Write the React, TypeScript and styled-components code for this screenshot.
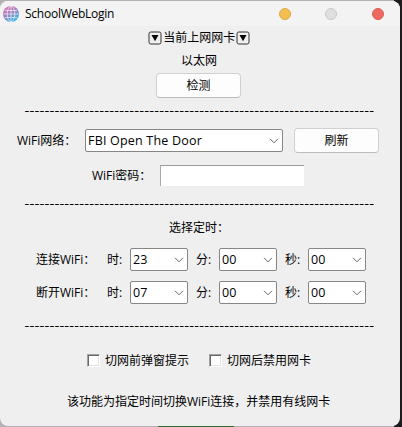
import React from "react";
import styled, { createGlobalStyle } from "styled-components";

const GlobalStyle = createGlobalStyle`
  * { box-sizing: border-box; }
  body { margin: 0; overflow: hidden; background: #1b1c1d; }
`;

const Desktop = styled.div`
  width: 402px;
  height: 427px;
  padding-top: 1px;
  background:
    linear-gradient(#1b1c1d, #1b1c1d) 394px 0 / 8px 427px no-repeat,
    linear-gradient(#2c6b2c, #2c6b2c) 158px 426px / 76px 1px no-repeat,
    #b3b1b3;
`;

const Window = styled.main`
  width: 400px;
  height: 425px;
  overflow: hidden;
  border-radius: 8px;
  background: #efefef;
  color: #000;
  font: 12px/16px "Open Sans", "Noto Sans CJK SC", sans-serif;
  white-space: nowrap;
`;

const TitleBar = styled.header`
  display: flex;
  align-items: center;
  height: 25px;
  padding-left: 3px;
  background: #f3f3f3;
`;

const Title = styled.h1`
  flex: 1;
  margin: 0 0 0 6px;
  font: 12px/16px "Open Sans", sans-serif;
  letter-spacing: -0.25px;
`;

const WindowControls = styled.div`
  display: flex;
  gap: 34px;
  padding-right: 16px;
`;

const Light = styled.button<{ $fill: string; $edge: string }>`
  width: 12px;
  height: 12px;
  padding: 0;
  border: 1px solid ${(p) => p.$edge};
  border-radius: 50%;
  background: ${(p) => p.$fill};
  &:nth-child(2) { margin-right: 1px; }
`;

const Row = styled.div<{ $h: number; $left?: number; $top?: number }>`
  display: flex;
  align-items: center;
  height: ${(p) => p.$h}px;
  margin-top: ${(p) => p.$top ?? 0}px;
  padding-left: ${(p) => p.$left ?? 0}px;
`;

const Label = styled.span<{ $w?: number }>`
  flex: none;
  width: ${(p) => (p.$w ? `${p.$w}px` : "auto")};
`;

const PushButton = styled.button`
  width: 85px;
  height: 25px;
  padding: 0;
  border: 1px solid #d0d0d0;
  border-bottom-color: #bcbcbc;
  border-radius: 4px;
  background: #fdfdfd;
  color: #000;
  font: inherit;
`;

const Rule = styled.div<{ $top: number }>`
  height: 16px;
  margin-top: ${(p) => p.$top}px;
  padding-left: 24.4px;
  font: 14px/16px "Noto Sans CJK SC", sans-serif;
  letter-spacing: 0.14px;
`;

const Combo = styled.div<{ $w: number; $after?: number; $track?: number }>`
  display: flex;
  flex: none;
  align-items: center;
  justify-content: space-between;
  width: ${(p) => p.$w}px;
  height: 23px;
  margin-right: ${(p) => p.$after ?? 0}px;
  padding: 0 3px 0 2px;
  border: 1px solid #868686;
  border-radius: 2px;
  background: #fff;
  font-size: 12.5px;
  letter-spacing: ${(p) => p.$track ?? 0}px;
`;

const Password = styled.input`
  width: 144px;
  height: 21px;
  padding: 0 4px;
  border: 0;
  border-top: 1px solid #999;
  border-left: 1px solid #aaa;
  border-radius: 0;
  background: #fff;
  outline: none;
`;

const CheckOption = styled.label<{ $w: number }>`
  display: flex;
  align-items: center;
  gap: 5px;
  width: ${(p) => p.$w}px;
`;

const CheckBox = styled.span`
  width: 13px;
  height: 13px;
  border: 1px solid;
  border-color: #a0a0a0 #fff #fff #a0a0a0;
  background: #fff;
  box-shadow: inset 1px 1px #696969, inset -1px -1px #e3e3e3;
`;

const Chevron = () => (
  <svg width="10" height="6" viewBox="0 0 10 6" fill="none">
    <path d="M1 .8 5 4.8 9 .8" stroke="#666" strokeWidth="1" />
  </svg>
);

const DownMark = () => (
  <svg width="14" height="14" viewBox="0 0 14 14">
    <rect x="1" y="1" width="12" height="12" rx="1.8" fill="none" stroke="#333" />
    <path d="M3.5 4h7L7 10.2Z" fill="#000" />
  </svg>
);

const Globe = () => (
  <svg width="16" height="16" viewBox="0 0 16 16">
    <defs>
      <linearGradient id="globe" gradientUnits="userSpaceOnUse" x1="3" y1="1" x2="11" y2="15">
        <stop offset="0" stopColor="#e070b0" />
        <stop offset=".5" stopColor="#9a86c6" />
        <stop offset="1" stopColor="#30b8e6" />
      </linearGradient>
    </defs>
    <circle cx="8" cy="8" r="8" fill="url(#globe)" />
    <g fill="none" stroke="#f3f3f3" strokeWidth=".7">
      <path d="M8 .5v15M.5 8h15M2 4.5h12M2 11.5h12" />
      <ellipse cx="8" cy="8" rx="3.8" ry="7.7" />
    </g>
  </svg>
);

const Separator = ({ top }: { top: number }) => <Rule $top={top}>{"-".repeat(70)}</Rule>;

const TimeRow = ({ name, hour, top }: { name: string; hour: string; top: number }) => (
  <Row $h={23} $top={top} $left={36}>
    <Label $w={71}>{name}</Label>
    <Label $w={23}>时:</Label>
    <Combo $w={58} $after={8}>{hour}<Chevron /></Combo>
    <Label $w={23}>分:</Label>
    <Combo $w={58} $after={8}>00<Chevron /></Combo>
    <Label $w={23}>秒:</Label>
    <Combo $w={58}>00<Chevron /></Combo>
  </Row>
);

export default function App() {
  return (
    <Desktop>
      <GlobalStyle />
      <Window>
        <TitleBar>
          <Globe />
          <Title>SchoolWebLogin</Title>
          <WindowControls>
            <Light $fill="#f3bd4f" $edge="#dba947" aria-label="minimize" />
            <Light $fill="#e0e0e0" $edge="#c8c8c8" aria-label="maximize" />
            <Light $fill="#ec695f" $edge="#db5d54" aria-label="close" />
          </WindowControls>
        </TitleBar>
        <Row $h={23} $left={148}>
          <DownMark />
          <Label $w={74}>&#8202;当前上网网卡</Label>
          <DownMark />
        </Row>
        <Row $h={23} $left={181}>以太网</Row>
        <Row $h={25} $top={1} $left={156}><PushButton>检测</PushButton></Row>
        <Separator top={3} />
        <Row $h={25} $top={11} $left={17}>
          <Label $w={68}>WiFi网络：</Label>
          <Combo $w={198} $after={11} $track={0.2}>FBI Open The Door<Chevron /></Combo>
          <PushButton>刷新</PushButton>
        </Row>
        <Row $h={21} $top={12} $left={92}>
          <Label $w={68}>WiFi密码：</Label>
          <Password aria-label="WiFi密码" />
        </Row>
        <Separator top={8} />
        <Row $h={20} $top={8} $left={169}>选择定时：</Row>
        <TimeRow name="连接WiFi：" hour="23" top={10} />
        <TimeRow name="断开WiFi：" hour="07" top={10} />
        <Separator top={12} />
        <Row $h={21} $top={18} $left={87}>
          <CheckOption $w={122}><CheckBox />切网前弹窗提示</CheckOption>
          <CheckOption $w={122}><CheckBox />切网后禁用网卡</CheckOption>
        </Row>
        <Row $h={20} $top={21} $left={67}>该功能为指定时间切换WiFi连接，并禁用有线网卡</Row>
      </Window>
    </Desktop>
  );
}
